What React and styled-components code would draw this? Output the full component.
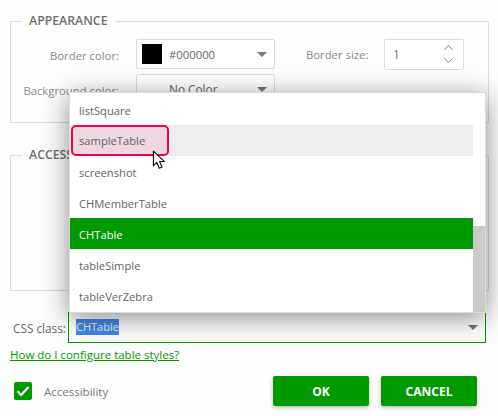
import React from 'react';
import styled, { createGlobalStyle } from 'styled-components';
import { ChevronUp, ChevronDown } from 'lucide-react';

const items = ['listSquare', 'sampleTable', 'screenshot', 'CHMemberTable', 'CHTable', 'tableSimple', 'tableVerZebra'];

export default function App() {
  return (
    <>
      <GlobalStyle />
      <Dialog>
        <Group $height={109} $gap={25}>
          <Legend>APPEARANCE</Legend>
          <FieldRow>
            <Label>Border color:</Label>
            <Select>
              <Swatch />
              <span>#000000</span>
              <Caret />
            </Select>
            <SideLabel>Border size:</SideLabel>
            <NumberBox>
              1
              <Stepper>
                <ChevronUp size={15} strokeWidth={1.2} />
                <ChevronDown size={15} strokeWidth={1.2} />
              </Stepper>
            </NumberBox>
          </FieldRow>
          <FieldRow>
            <Label>Background color:</Label>
            <Select>
              <NoColor>No Color</NoColor>
              <Caret />
            </Select>
          </FieldRow>
        </Group>

        <Group $height={143} $gap={21}>
          <Legend>ACCESSIBILITY</Legend>
        </Group>

        <ClassRow>
          <ClassLabel>CSS class:</ClassLabel>
          <ClassInput>
            <Selected>CHTable</Selected>
            <Caret />
          </ClassInput>
        </ClassRow>

        <HelpLink href='#'>How do I configure table styles?</HelpLink>

        <Footer>
          <CheckWrap>
            <CheckBox>
              <svg width='14' height='12' viewBox='0 0 14 12'>
                <path d='M1.5 6.2 5.2 10 12.5 2' fill='none' stroke='#fff' strokeWidth='2.2' />
              </svg>
            </CheckBox>
            <CheckLabel>Accessibility</CheckLabel>
          </CheckWrap>
          <Buttons>
            <Button>OK</Button>
            <Button>CANCEL</Button>
          </Buttons>
        </Footer>

        <Popup>
          <List>
            {items.map((name) => (
              <Item key={name} $hover={name === 'sampleTable'} $active={name === 'CHTable'}>
                <ItemText $focus={name === 'sampleTable'}>{name}</ItemText>
              </Item>
            ))}
          </List>
          <Track>
            <Thumb />
          </Track>
        </Popup>

        <Pointer width='15' height='21' viewBox='0 0 16 22'>
          <path
            d='M1.5 1v15.5l3.6-3.4 2.6 6.2 3-1.3-2.6-6h5z'
            fill='#fff'
            stroke='#111'
            strokeWidth='1.2'
            strokeLinejoin='round'
          />
        </Pointer>
      </Dialog>
    </>
  );
}

const GlobalStyle = createGlobalStyle`
  html, body {
    margin: 0;
    background: #fdfdfd;
  }
  body {
    font-family: "Open Sans", "Noto Sans", "Liberation Sans", sans-serif;
    font-size: 11.3px;
    color: #666;
  }
`;

const Dialog = styled.div`
  position: relative;
  width: 498px;
  height: 416px;
  box-sizing: border-box;
  padding: 14px 10px 0;
  overflow: hidden;
`;

const Group = styled.fieldset`
  box-sizing: border-box;
  width: 479px;
  height: ${(p) => p.$height}px;
  margin: 0 0 ${(p) => p.$gap}px;
  padding: 11px 0 0;
  border: 1px solid #dcdcdc;
  display: flex;
  flex-direction: column;
  gap: 5px;
`;

const Legend = styled.legend`
  margin-left: 11px;
  padding: 0 7px;
  font-size: 12.3px;
  line-height: 14px;
  font-weight: 600;
  color: #6f6f6f;
`;

const FieldRow = styled.div`
  display: flex;
  align-items: center;
  height: 30px;
`;

const Label = styled.label`
  width: 108px;
  flex: none;
  margin-right: 17px;
  padding-top: 2px;
  text-align: right;
  color: #8a8a8a;
  white-space: nowrap;
`;

const Select = styled.div`
  position: relative;
  box-sizing: border-box;
  display: flex;
  align-items: center;
  gap: 7px;
  width: 139px;
  height: 30px;
  padding-left: 5px;
  border: 1px solid #dcdcdc;
  border-radius: 2px;
  background: #fff;
  color: #666;
`;

const Swatch = styled.span`
  width: 20px;
  height: 20px;
  background: #000;
`;

const NoColor = styled.span`
  margin-left: 27px;
  font-size: 11.8px;
`;

const Caret = styled.span`
  position: absolute;
  right: 7px;
  top: 50%;
  margin-top: -2px;
  border-style: solid;
  border-width: 5px 5px 0;
  border-color: #777 transparent transparent;
`;

const SideLabel = styled.label`
  margin-left: 31px;
  width: 78px;
  flex: none;
  color: #8a8a8a;
`;

const NumberBox = styled.div`
  box-sizing: border-box;
  display: flex;
  align-items: center;
  justify-content: space-between;
  width: 80px;
  height: 31px;
  padding: 0 8px;
  border: 1px solid #dcdcdc;
  border-radius: 2px;
  background: #fff;
  color: #777;
  font-size: 12px;
`;

const Stepper = styled.div`
  display: flex;
  flex-direction: column;
  margin-right: -1px;
  color: #555;

  svg {
    display: block;
    margin: -1px 0;
  }
`;

const ClassRow = styled.div`
  display: flex;
  align-items: center;
  height: 31px;
  margin-left: 3px;
`;

const ClassLabel = styled.label`
  width: 55px;
  flex: none;
  font-size: 11.8px;
  color: #666;
  white-space: nowrap;
`;

const ClassInput = styled.div`
  position: relative;
  box-sizing: border-box;
  display: flex;
  align-items: center;
  width: 418px;
  height: 31px;
  padding-left: 7px;
  border: 1px solid #090;
  border-top: none;
  background: #fff;
`;

const Selected = styled.span`
  background: #4389e8;
  color: #e8eefa;
  font-size: 11px;
  line-height: 16px;
`;

const HelpLink = styled.a`
  display: inline-block;
  margin-top: 4px;
  font-size: 11.5px;
  line-height: 16px;
  color: #090;
  text-decoration: underline;
`;

const Footer = styled.div`
  display: flex;
  align-items: center;
  justify-content: space-between;
  margin-top: 13px;
  padding: 0 11px 0 4px;
`;

const CheckWrap = styled.label`
  display: flex;
  align-items: center;
  gap: 12px;
`;

const CheckBox = styled.span`
  display: flex;
  align-items: center;
  justify-content: center;
  width: 18px;
  height: 18px;
  border-radius: 2px;
  background: #090;
`;

const CheckLabel = styled.span`
  font-size: 11.5px;
  color: #777;
`;

const Buttons = styled.div`
  display: flex;
  gap: 12px;
`;

const Button = styled.button`
  width: 96px;
  height: 30px;
  border: none;
  border-radius: 2px;
  background: #090;
  box-shadow: 0 2px 4px rgba(0, 0, 0, 0.25);
  color: #fff;
  font: 700 12px "Open Sans", "Noto Sans", sans-serif;
`;

const Popup = styled.div`
  position: absolute;
  left: 69px;
  top: 92px;
  width: 417px;
  height: 221px;
  box-sizing: border-box;
  display: flex;
  border: 1px solid #dcdcdc;
  background: #fff;
  box-shadow: 0 5px 25px rgba(0, 0, 0, 0.45);
`;

const List = styled.div`
  flex: 1;
  padding-top: 1px;
`;

const Item = styled.div`
  height: 31px;
  display: flex;
  align-items: center;
  background: ${(p) => (p.$active ? '#090' : p.$hover ? '#ededed' : 'transparent')};
  color: ${(p) => (p.$active ? '#fff' : '#5f6368')};
  font-size: 11.2px;
`;

const ItemText = styled.span`
  box-sizing: border-box;
  display: flex;
  align-items: center;
  height: 100%;
  padding: ${(p) => (p.$focus ? 0 : 2)}px ${(p) => (p.$focus ? 22 : 0)}px 0 ${(p) => (p.$focus ? 6 : 9)}px;
  margin-left: ${(p) => (p.$focus ? 1 : 0)}px;
  border: ${(p) => (p.$focus ? '2px solid #e8005a' : 'none')};
  border-radius: ${(p) => (p.$focus ? 5 : 0)}px;
  background: ${(p) => (p.$focus ? '#efd6e0' : 'transparent')};
`;

const Track = styled.div`
  width: 12px;
  flex: none;
  display: flex;
  flex-direction: column;
  justify-content: flex-end;
`;

const Thumb = styled.div`
  height: 86px;
  background: #cacaca;
`;

const Pointer = styled.svg`
  position: absolute;
  left: 152px;
  top: 150px;
`;
